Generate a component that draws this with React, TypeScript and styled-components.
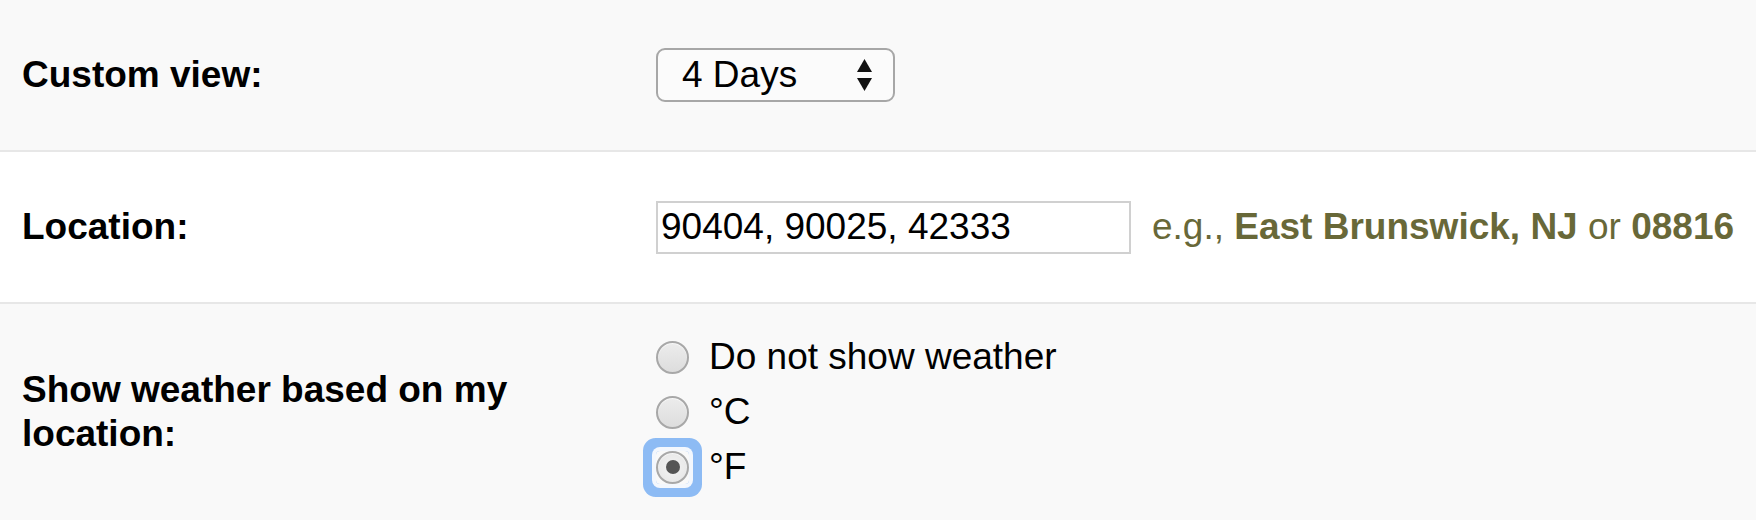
import styled, { createGlobalStyle } from "styled-components";

const GlobalStyle = createGlobalStyle`
  body {
    margin: 0;
    background: #f9f9f9;
    font-family: "Liberation Sans", Arial, sans-serif;
    color: #000;
  }
`;

const Page = styled.div`
  width: 100%;
  overflow: hidden;
`;

const Row = styled.div<{ $height: number; $white?: boolean; $last?: boolean }>`
  display: grid;
  grid-template-columns: 634px 1fr;
  align-items: center;
  height: ${(p) => p.$height}px;
  padding-left: 22px;
  background: ${(p) => (p.$white ? "#ffffff" : "#f9f9f9")};
  border-bottom: ${(p) => (p.$last ? "none" : "2px solid #e7e7e7")};
`;

const Label = styled.div`
  font-size: 37px;
  font-weight: bold;
  line-height: 44px;
  max-width: 560px;
`;

const Control = styled.div`
  display: flex;
  align-items: center;
`;

// fake mac style select
const SelectBox = styled.div`
  box-sizing: border-box;
  display: flex;
  align-items: center;
  justify-content: space-between;
  width: 239px;
  height: 54px;
  padding: 0 20px 0 24px;
  border: 2px solid #a7a7a7;
  border-radius: 9px;
  background: #fbfbfb;
  font-size: 37px;
`;

const Arrows = styled.svg`
  width: 17px;
  height: 34px;
  display: block;
`;

const TextInput = styled.input`
  box-sizing: border-box;
  width: 475px;
  height: 53px;
  padding: 0 0 0 3px;
  border: 2px solid #d0d0d0;
  background: #fff;
  font-family: "Liberation Sans", Arial, sans-serif;
  font-size: 37px;
  color: #000;
  outline: none;
`;

const Hint = styled.span`
  margin-left: 21px;
  font-size: 37px;
  color: #686838;
  white-space: nowrap;

  b {
    font-weight: bold;
  }
`;

const RadioGroup = styled.div`
  display: flex;
  flex-direction: column;
`;

const Option = styled.label`
  display: flex;
  align-items: center;
  height: 55px;
  font-size: 37px;
`;

const RadioFrame = styled.span<{ $focus?: boolean }>`
  display: inline-flex;
  width: 33px;
  height: 33px;
  margin-right: 20px;
  border-radius: 4px;
  box-shadow: ${(p) =>
    p.$focus ? "0 0 0 4px #f3f7fd, 0 0 0 13px #8dbbf4" : "none"};
`;

const RadioDot = styled.span<{ $checked?: boolean }>`
  box-sizing: border-box;
  display: flex;
  align-items: center;
  justify-content: center;
  width: 33px;
  height: 33px;
  border-radius: 50%;
  border: 2px solid #a8a8a8;
  background: ${(p) =>
    p.$checked
      ? "radial-gradient(circle, #f4f4f4 0%, #e4e4e4 100%)"
      : "linear-gradient(#ececec, #dddddd)"};
  box-shadow: inset 0 1px 1px rgba(255, 255, 255, 0.7);

  &::after {
    content: "";
    display: ${(p) => (p.$checked ? "block" : "none")};
    width: 14px;
    height: 14px;
    border-radius: 50%;
    background: #555;
  }
`;

const options = [
  { text: "Do not show weather", checked: false },
  { text: "°C", checked: false },
  { text: "°F", checked: true },
];

const App = () => {
  return (
    <Page>
      <GlobalStyle />
      <Row $height={150}>
        <Label>Custom view:</Label>
        <Control>
          <SelectBox>
            <span>4 Days</span>
            <Arrows viewBox="0 0 17 34">
              <polygon points="8.5,1 16,14 1,14" fill="#111" />
              <polygon points="1,20 16,20 8.5,33" fill="#111" />
            </Arrows>
          </SelectBox>
        </Control>
      </Row>
      <Row $height={150} $white>
        <Label>Location:</Label>
        <Control>
          <TextInput defaultValue="90404, 90025, 42333" />
          <Hint>
            e.g., <b>East Brunswick, NJ</b> or <b>08816</b>
          </Hint>
        </Control>
      </Row>
      <Row $height={216} $last>
        <Label>Show weather based on my location:</Label>
        <RadioGroup>
          {options.map((o) => (
            <Option key={o.text}>
              <RadioFrame $focus={o.checked}>
                <RadioDot $checked={o.checked} />
              </RadioFrame>
              {o.text}
            </Option>
          ))}
        </RadioGroup>
      </Row>
    </Page>
  );
};

export default App;
